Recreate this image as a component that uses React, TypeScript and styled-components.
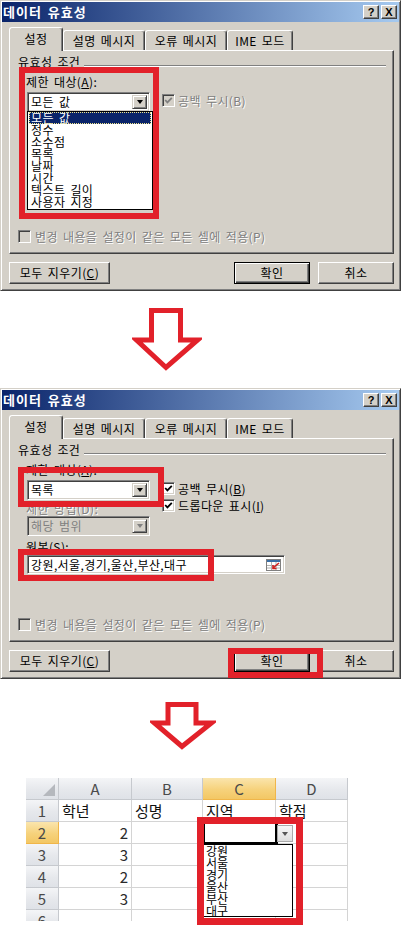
import React from "react";
import styled, { createGlobalStyle } from "styled-components";

const RED = "#e2212a";
const FACE = "#d4d0c8";
const UI_FONT = `"Noto Sans CJK KR", "Noto Sans", sans-serif`;

const GlobalStyle = createGlobalStyle`
  html, body {
    margin: 0;
    padding: 0;
    background: #fff;
  }
  body {
    font-family: ${UI_FONT};
    font-size: 12px;
  }
`;

const Page = styled.div`
  width: 404px;
  height: 948px;
  overflow: hidden;
  display: flex;
  flex-direction: column;
  background: #fff;
`;

/* ---------- dialog window ---------- */

const Win = styled.div`
  position: relative;
  flex-shrink: 0;
  width: 401px;
  height: 291px;
  box-sizing: border-box;
  padding: 1px;
  background: ${FACE};
  border: 1px solid;
  border-color: ${FACE} #404040 #404040 ${FACE};
  box-shadow: inset 1px 1px #fff, inset -1px -1px #808080;
  display: flex;
  flex-direction: column;
  font-family: ${UI_FONT};
  font-size: 12px;
  letter-spacing: 0.4px;
  word-spacing: 2px;
  color: #000;
`;

const TitleBar = styled.div`
  height: 20px;
  display: flex;
  align-items: center;
  justify-content: space-between;
  padding: 0 2px 0 1px;
  background: linear-gradient(to right, #0a246a, #a6caf0);
`;

const Title = styled.span`
  color: #fff;
  font-weight: 700;
  font-size: 13px;
  letter-spacing: 1px;
  line-height: 20px;
`;

const TitleButtons = styled.div`
  display: flex;
  gap: 2px;
`;

const TitleButton = styled.span`
  width: 16px;
  height: 14px;
  box-sizing: border-box;
  background: ${FACE};
  border: 1px solid;
  border-color: #fff #404040 #404040 #fff;
  box-shadow: inset -1px -1px #808080;
  display: flex;
  align-items: center;
  justify-content: center;
  font: 700 11px "Liberation Sans", sans-serif;
  letter-spacing: 0;
  color: #000;
`;

const Body = styled.div`
  padding: 5px 0 0 7px;
  display: flex;
  flex-direction: column;
`;

const TabRow = styled.div`
  position: relative;
  z-index: 1;
  display: flex;
  align-items: flex-end;
  height: 24px;
  margin-bottom: -1px;
`;

const Tab = styled.div<{ $active?: boolean; $w: number }>`
  box-sizing: border-box;
  width: ${(p) => p.$w}px;
  height: ${(p) => (p.$active ? 24 : 20)}px;
  margin-bottom: ${(p) => (p.$active ? 0 : 1)}px;
  padding-bottom: ${(p) => (p.$active ? 2 : 0)}px;
  background: ${FACE};
  border-top: 1px solid #fff;
  border-left: 1px solid #fff;
  border-right: 1px solid #404040;
  border-radius: 3px 3px 0 0;
  box-shadow: inset -1px 0 #808080;
  display: flex;
  align-items: center;
  justify-content: center;
  line-height: 14px;
  white-space: nowrap;
`;

const Panel = styled.div`
  position: relative;
  width: 385px;
  height: 204px;
  box-sizing: border-box;
  padding: 4px 8px 8px 8px;
  border: 1px solid;
  border-color: #fff #404040 #404040 #fff;
  box-shadow: inset -1px -1px #808080;
  display: flex;
  flex-direction: column;
`;

const GroupHeader = styled.div`
  height: 14px;
  display: flex;
`;

const GroupLabel = styled.span`
  line-height: 14px;
`;

const GroupLine = styled.span`
  flex: 1;
  align-self: flex-start;
  margin: 10px -1px 0 4px;
  border-top: 1px solid #808080;
  border-bottom: 1px solid #fff;
`;

const FieldLabel = styled.div<{ $gap: number; $indent?: number; $disabled?: boolean }>`
  margin: ${(p) => p.$gap}px 0 0 ${(p) => p.$indent ?? 8}px;
  height: 14px;
  line-height: 14px;
  white-space: nowrap;
  color: ${(p) => (p.$disabled ? "#808080" : "#000")};
  text-shadow: ${(p) => (p.$disabled ? "1px 1px #fff" : "none")};
`;

const FieldRow = styled.div`
  display: flex;
  gap: 12px;
  margin: 3px 0 0 9px;
`;

const FieldColumn = styled.div`
  display: flex;
  flex-direction: column;
  width: 123px;
`;

const Sunken = styled.div<{ $disabled?: boolean }>`
  position: relative;
  box-sizing: border-box;
  border: 1px solid;
  border-color: #808080 #fff #fff #808080;
  box-shadow: inset 1px 1px #404040, inset -1px -1px ${FACE};
  background: ${(p) => (p.$disabled ? FACE : "#fff")};
  display: flex;
  align-items: center;
  padding: 2px;
`;

const Combo = styled(Sunken)`
  width: 123px;
  height: 20px;
`;

const ComboText = styled.span<{ $disabled?: boolean }>`
  flex: 1;
  padding-left: 1px;
  line-height: 14px;
  white-space: nowrap;
  color: ${(p) => (p.$disabled ? "#808080" : "#000")};
`;

const DropButton = styled.span`
  width: 15px;
  height: 14px;
  box-sizing: border-box;
  background: ${FACE};
  border: 1px solid;
  border-color: ${FACE} #404040 #404040 ${FACE};
  box-shadow: inset 1px 1px #fff, inset -1px -1px #808080;
  display: flex;
  align-items: center;
  justify-content: center;
`;

const Triangle = styled.span<{ $color?: string }>`
  width: 0;
  height: 0;
  border-left: 3.5px solid transparent;
  border-right: 3.5px solid transparent;
  border-top: 4px solid ${(p) => p.$color ?? "#000"};
`;

const DropList = styled.div`
  position: absolute;
  left: -1px;
  top: 18px;
  z-index: 3;
  width: 126px;
  height: 99px;
  box-sizing: border-box;
  border: 1px solid #000;
  background: #fff;
  padding: 0 1px;
`;

const ListItem = styled.div<{ $selected?: boolean }>`
  height: 12px;
  line-height: 12px;
  padding-left: 2px;
  white-space: nowrap;
  background: ${(p) => (p.$selected ? "#0a246a" : "transparent")};
  color: ${(p) => (p.$selected ? "#fff" : "#000")};
  outline: ${(p) => (p.$selected ? "1px dotted #f0e68c" : "none")};
  outline-offset: -1px;
`;

const CheckColumn = styled.div`
  display: flex;
  flex-direction: column;
`;

const CheckRow = styled.label<{ $disabled?: boolean }>`
  height: 17px;
  display: flex;
  align-items: center;
  gap: 3px;
  color: ${(p) => (p.$disabled ? "#808080" : "#000")};
  text-shadow: ${(p) => (p.$disabled ? "1px 1px #fff" : "none")};
  line-height: 14px;
  white-space: nowrap;
`;

const Box = styled.span<{ $disabled?: boolean }>`
  flex-shrink: 0;
  width: 13px;
  height: 13px;
  box-sizing: border-box;
  border: 1px solid;
  border-color: #808080 #fff #fff #808080;
  box-shadow: inset 1px 1px #404040, inset -1px -1px ${FACE};
  background: ${(p) => (p.$disabled ? FACE : "#fff")};
  display: flex;
  align-items: center;
  justify-content: center;
  text-shadow: none;
`;

const ApplyRow = styled(CheckRow)`
  margin-top: auto;
  gap: 4px;
`;

const SourceInput = styled(Sunken)`
  width: 258px;
  height: 19px;
  margin: 1px 0 0 9px;
  padding: 2px 2px 2px 3px;
`;

const SourceText = styled.span`
  flex: 1;
  line-height: 14px;
  white-space: nowrap;
`;

const Footer = styled.div`
  display: flex;
  gap: 8px;
  width: 385px;
  margin-top: 8px;
`;

const Button = styled.div<{ $w: number; $default?: boolean; $push?: boolean }>`
  box-sizing: border-box;
  width: ${(p) => p.$w}px;
  height: 22px;
  margin-left: ${(p) => (p.$push ? "auto" : "0")};
  background: ${FACE};
  border: 1px solid;
  border-color: ${(p) => (p.$default ? "#000" : "#fff #404040 #404040 #fff")};
  box-shadow: ${(p) =>
    p.$default
      ? "inset 1px 1px #fff, inset -1px -1px #404040, inset -2px -2px #808080"
      : "inset -1px -1px #808080"};
  display: flex;
  align-items: center;
  justify-content: center;
  line-height: 14px;
  white-space: nowrap;
`;

const Highlight = styled.div<{ $x: number; $y: number; $w: number; $h: number; $t?: number }>`
  position: absolute;
  left: ${(p) => p.$x}px;
  top: ${(p) => p.$y}px;
  width: ${(p) => p.$w}px;
  height: ${(p) => p.$h}px;
  box-sizing: border-box;
  border: ${(p) => p.$t ?? 6}px solid ${RED};
  z-index: 5;
  pointer-events: none;
`;

function Check({ color = "#000" }: { color?: string }) {
  return (
    <svg width="9" height="9" viewBox="0 0 9 9">
      <polyline points="1.2,4 3.4,6.4 7.8,1.8" fill="none" stroke={color} strokeWidth="1.8" />
    </svg>
  );
}

function RangeIcon() {
  return (
    <svg width="16" height="14" viewBox="0 0 16 14">
      <rect x="0.5" y="1.5" width="14" height="11" fill="#fff" stroke="#808080" />
      <rect x="1" y="2" width="13" height="2" fill="#3a6ea5" />
      <path d="M1 7.5h13M1 10h13M5.5 4v8M10 4v8" stroke="#b0b0b0" strokeWidth="1" />
      <path d="M13 5 L7 10 M7 7 V10.5 H10.5" stroke="#d02020" strokeWidth="1.6" fill="none" />
    </svg>
  );
}

const limitItems = ["모든 값", "정수", "소수점", "목록", "날짜", "시간", "텍스트 길이", "사용자 지정"];

function ValidationDialog({ mode }: { mode: "open" | "list" }) {
  const isList = mode === "list";
  return (
    <Win>
      <TitleBar>
        <Title>데이터 유효성</Title>
        <TitleButtons>
          <TitleButton>?</TitleButton>
          <TitleButton>X</TitleButton>
        </TitleButtons>
      </TitleBar>
      <Body>
        <TabRow>
          <Tab $active $w={54}>설정</Tab>
          <Tab $w={82}>설명 메시지</Tab>
          <Tab $w={82}>오류 메시지</Tab>
          <Tab $w={66}>IME 모드</Tab>
        </TabRow>
        <Panel>
          <GroupHeader>
            <GroupLabel>유효성 조건</GroupLabel>
            <GroupLine />
          </GroupHeader>
          <FieldLabel $gap={6}>
            제한 대상(<u>A</u>):
          </FieldLabel>
          <FieldRow>
            <FieldColumn>
              <Combo>
                <ComboText>{isList ? "목록" : "모든 값"}</ComboText>
                <DropButton>
                  <Triangle />
                </DropButton>
                {!isList && (
                  <DropList>
                    {limitItems.map((item, i) => (
                      <ListItem key={item} $selected={i === 0}>
                        {item}
                      </ListItem>
                    ))}
                  </DropList>
                )}
              </Combo>
              {isList && (
                <>
                  <FieldLabel $gap={2} $indent={-1} $disabled>
                    제한 방법(D):
                  </FieldLabel>
                  <Combo $disabled>
                    <ComboText $disabled>해당 범위</ComboText>
                    <DropButton>
                      <Triangle $color="#808080" />
                    </DropButton>
                  </Combo>
                </>
              )}
            </FieldColumn>
            <CheckColumn>
              <CheckRow $disabled={!isList}>
                <Box $disabled={!isList}>
                  <Check color={isList ? "#000" : "#808080"} />
                </Box>
                {isList ? (
                  <span>
                    공백 무시(<u>B</u>)
                  </span>
                ) : (
                  <span>공백 무시(B)</span>
                )}
              </CheckRow>
              {isList && (
                <CheckRow>
                  <Box>
                    <Check />
                  </Box>
                  <span>
                    드롭다운 표시(<u>I</u>)
                  </span>
                </CheckRow>
              )}
            </CheckColumn>
          </FieldRow>
          {isList && (
            <>
              <FieldLabel $gap={4}>
                원본(<u>S</u>):
              </FieldLabel>
              <SourceInput>
                <SourceText>강원,서울,경기,울산,부산,대구</SourceText>
                <RangeIcon />
              </SourceInput>
            </>
          )}
          <ApplyRow $disabled>
            <Box $disabled />
            <span>변경 내용을 설정이 같은 모든 셀에 적용(P)</span>
          </ApplyRow>
        </Panel>
        <Footer>
          <Button $w={101}>
            <span>
              모두 지우기(<u>C</u>)
            </span>
          </Button>
          <Button $w={76} $default $push>
            확인
          </Button>
          <Button $w={76}>취소</Button>
        </Footer>
      </Body>
      {isList ? (
        <>
          <Highlight $x={17} $y={78} $w={146} $h={40} />
          <Highlight $x={17} $y={160} $w={196} $h={32} />
          <Highlight $x={227} $y={259} $w={95} $h={30} />
        </>
      ) : (
        <Highlight $x={18} $y={66} $w={140} $h={152} />
      )}
    </Win>
  );
}

/* ---------- arrows ---------- */

const ArrowSlot = styled.div<{ $h: number; $top: number; $left: number }>`
  flex-shrink: 0;
  height: ${(p) => p.$h}px;
  padding: ${(p) => p.$top}px 0 0 ${(p) => p.$left}px;
  box-sizing: border-box;
`;

function DownArrow({ w, h, shaft, neck, tip }: { w: number; h: number; shaft: [number, number]; neck: number; tip: number }) {
  const cx = (shaft[0] + shaft[1]) / 2;
  const pts = [
    [shaft[0], 4.5],
    [shaft[1], 4.5],
    [shaft[1], neck],
    [w - 4.5, neck],
    [cx, tip],
    [4.5, neck],
    [shaft[0], neck],
  ]
    .map((p) => p.join(","))
    .join(" ");
  return (
    <svg width={w} height={h} viewBox={`0 0 ${w} ${h}`} style={{ display: "block" }}>
      <polygon points={pts} fill="#fff" stroke={RED} strokeWidth="5" strokeLinejoin="miter" />
    </svg>
  );
}

/* ---------- spreadsheet ---------- */

const Sheet = styled.div`
  position: relative;
  flex-shrink: 0;
  margin-left: 26px;
  width: 322px;
  font-family: ${UI_FONT};
`;

const Grid = styled.div`
  display: grid;
  grid-template-columns: 33px 73px 71px 73px 72px;
  grid-template-rows: repeat(7, 22px);
  height: 143px;
  overflow: hidden;
`;

const HeadCell = styled.div<{ $selected?: boolean }>`
  box-sizing: border-box;
  border-right: 1px solid ${(p) => (p.$selected ? "#f0b64a" : "#c6c9ce")};
  border-bottom: 1px solid ${(p) => (p.$selected ? "#f0b64a" : "#c6c9ce")};
  background: ${(p) =>
    p.$selected
      ? "linear-gradient(#fae5ad, #f6d27c 55%, #f3c764)"
      : "linear-gradient(#f4f5f7, #e6e8ec 55%, #dfe2e7)"};
  color: #4a4a4a;
  font-size: 15px;
  display: flex;
  align-items: center;
  justify-content: center;
  line-height: 20px;
`;

const Corner = styled(HeadCell)`
  position: relative;
  &::after {
    content: "";
    position: absolute;
    right: 3px;
    bottom: 3px;
    width: 0;
    height: 0;
    border-left: 12px solid transparent;
    border-bottom: 12px solid #b5b8bd;
  }
`;

const Cell = styled.div<{ $num?: boolean }>`
  box-sizing: border-box;
  border-right: 1px solid #d4d4d4;
  border-bottom: 1px solid #d4d4d4;
  display: flex;
  align-items: center;
  justify-content: ${(p) => (p.$num ? "flex-end" : "flex-start")};
  padding: ${(p) => (p.$num ? "0 3px 0 0" : "0 0 0 3px")};
  font-size: 15px;
  line-height: 20px;
  color: ${(p) => (p.$num ? "#2a2a2a" : "#111")};
  white-space: nowrap;
`;

const ActiveCell = styled.div`
  position: absolute;
  left: 176px;
  top: 43px;
  width: 76px;
  height: 24px;
  box-sizing: border-box;
  border: 3px solid #000;
  background: #fff;
  z-index: 2;
`;

const CellDrop = styled.div`
  position: absolute;
  left: 251px;
  top: 47px;
  width: 16px;
  height: 17px;
  box-sizing: border-box;
  border: 1px solid #a9a9a9;
  background: linear-gradient(#f7f7f7, #dedede);
  display: flex;
  align-items: center;
  justify-content: center;
  z-index: 2;
`;

const CellList = styled.div`
  position: absolute;
  left: 177px;
  top: 66px;
  width: 90px;
  height: 73px;
  box-sizing: border-box;
  border: 1px solid #000;
  background: #fff;
  padding: 0 0 0 2px;
  z-index: 3;
  font-size: 12px;
`;

const CellListItem = styled.div`
  height: 12px;
  line-height: 12px;
`;

const sheetRows: string[][] = [
  ["학년", "성명", "지역", "학점"],
  ["2", "", "", ""],
  ["3", "", "", ""],
  ["2", "", "", ""],
  ["3", "", "", ""],
  ["", "", "", ""],
];

const regions = ["강원", "서울", "경기", "울산", "부산", "대구"];

function Spreadsheet() {
  return (
    <Sheet>
      <Grid>
        <Corner />
        {["A", "B", "C", "D"].map((c) => (
          <HeadCell key={c} $selected={c === "C"}>
            {c}
          </HeadCell>
        ))}
        {sheetRows.map((row, r) => (
          <React.Fragment key={r}>
            <HeadCell $selected={r === 1}>{r + 1}</HeadCell>
            {row.map((v, c) => (
              <Cell key={c} $num={r > 0 && c === 0}>
                {v}
              </Cell>
            ))}
          </React.Fragment>
        ))}
      </Grid>
      <ActiveCell />
      <CellDrop>
        <Triangle $color="#555" />
      </CellDrop>
      <CellList>
        {regions.map((r) => (
          <CellListItem key={r}>{r}</CellListItem>
        ))}
      </CellList>
      <Highlight $x={171} $y={39} $w={106} $h={108} $t={7} />
    </Sheet>
  );
}

export default function App() {
  return (
    <Page>
      <GlobalStyle />
      <ValidationDialog mode="open" />
      <ArrowSlot $h={97} $top={15} $left={132}>
        <DownArrow w={70} h={68} shaft={[19.5, 48.5]} neck={34} tip={61.5} />
      </ArrowSlot>
      <ValidationDialog mode="list" />
      <ArrowSlot $h={99} $top={21} $left={150}>
        <DownArrow w={66} h={54} shaft={[18, 46]} neck={23} tip={46.5} />
      </ArrowSlot>
      <Spreadsheet />
    </Page>
  );
}
